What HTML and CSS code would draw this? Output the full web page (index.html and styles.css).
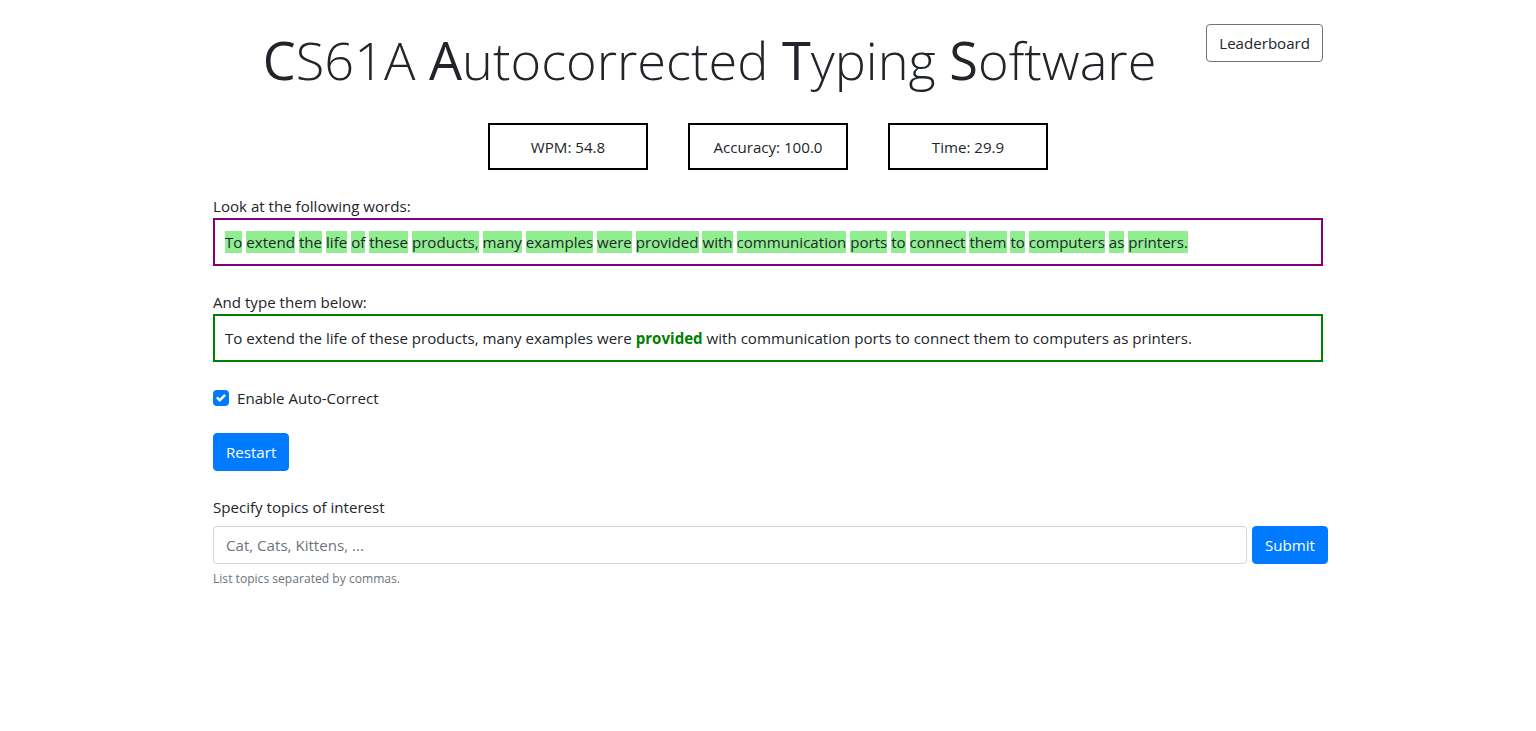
FILE: index.html
```html
<!DOCTYPE html>
<html lang="en">
<head>
<meta charset="utf-8">
<title>CS61A Autocorrected Typing Software</title>
<link rel="stylesheet" href="styles.css">
</head>
<body>
<div class="container">
  <header class="header">
    <h1 class="title"><b>C</b>S61A <b>A</b>utocorrected <b>T</b>yping <b>S</b>oftware</h1>
    <button class="btn btn-outline">Leaderboard</button>
  </header>

  <div class="stats">
    <div class="stat">WPM: 54.8</div>
    <div class="stat">Accuracy: 100.0</div>
    <div class="stat">Time: 29.9</div>
  </div>

  <div class="label">Look at the following words:</div>
  <div class="prompt-box">
    <span class="w">To</span> <span class="w">extend</span> <span class="w">the</span> <span class="w">life</span> <span class="w">of</span> <span class="w">these</span> <span class="w">products,</span> <span class="w">many</span> <span class="w">examples</span> <span class="w">were</span> <span class="w">provided</span> <span class="w">with</span> <span class="w">communication</span> <span class="w">ports</span> <span class="w">to</span> <span class="w">connect</span> <span class="w">them</span> <span class="w">to</span> <span class="w">computers</span> <span class="w">as</span> <span class="w">printers.</span>
  </div>

  <div class="label label-second">And type them below:</div>
  <div class="typed-box">To extend the life of these products, many examples were <strong class="hl">provided</strong> with communication ports to connect them to computers as printers.</div>

  <label class="check">
    <span class="check-box"><svg width="10" height="10" viewBox="0 0 8 8"><path fill="#fff" d="M6.564.75l-3.59 3.612-1.538-1.55L0 4.26l2.974 2.99L8 2.193z"/></svg></span>
    <span class="check-text">Enable Auto-Correct</span>
  </label>

  <button class="btn btn-primary restart">Restart</button>

  <div class="topics">
    <div class="topics-label">Specify topics of interest</div>
    <div class="topics-row">
      <input class="topics-input" type="text" placeholder="Cat, Cats, Kittens, ...">
      <button class="btn btn-primary submit">Submit</button>
    </div>
    <small class="help">List topics separated by commas.</small>
  </div>
</div>
</body>
</html>
```

FILE: styles.css
```css
* { box-sizing: border-box; }
html, body { margin: 0; padding: 0; background: #fff; }
body {
  font-family: "Open Sans", "Noto Sans", "Liberation Sans", sans-serif;
  font-size: 15.1px;
  line-height: 24px;
  color: #212529;
}
.container {
  width: 1140px;
  margin: 0 auto;
  padding: 0 15px;
}
.header {
  display: flex;
  align-items: flex-start;
  padding-top: 24px;
}
.title {
  flex: 1;
  margin: 0;
  padding-top: 4px;
  text-align: center;
  font-size: 52.3px;
  font-weight: 300;
  line-height: 64px;
  color: #212529;
}
.title b { font-weight: 400; }
.btn {
  font-family: inherit;
  font-size: 15.1px;
  line-height: 24px;
  padding: 6px 12px;
  border-radius: 4px;
  border: 1px solid transparent;
  cursor: pointer;
}
.btn-outline {
  background: #fff;
  border-color: #6c757d;
  color: #212529;
}
.btn-primary {
  background: #007bff;
  border-color: #007bff;
  color: #fff;
}
.stats {
  display: flex;
  justify-content: center;
  gap: 40px;
  margin-top: 31px;
}
.stat {
  width: 160px;
  height: 47px;
  border: 2px solid #000;
  display: flex;
  align-items: center;
  justify-content: center;
}
.label {
  margin-top: 24px;
  line-height: 24px;
}
.label-second { margin-top: 24px; }
.prompt-box, .typed-box {
  border: 2px solid #800080;
  padding: 10px 10px;
  line-height: 24px;
}
.typed-box { border-color: #008000; }
.w { background: #90ee90; padding: 1px 0; }
.hl { color: #008000; font-weight: 700; }
.check {
  display: flex;
  align-items: center;
  gap: 8px;
  margin-top: 24px;
}
.check-box {
  width: 16px;
  height: 16px;
  border-radius: 4px;
  background: #007bff;
  display: flex;
  align-items: center;
  justify-content: center;
}
.restart {
  display: block;
  margin-top: 23px;
}
.topics { margin-top: 24px; }
.topics-label { margin-bottom: 7px; }
.topics-row {
  display: flex;
  gap: 5px;
  margin-right: -5px;
}
.topics-input {
  flex: 1;
  height: 38px;
  padding: 6px 12px;
  font-family: inherit;
  font-size: 15.1px;
  border: 1px solid #ced4da;
  border-radius: 4px;
  color: #495057;
}
.topics-input::placeholder { color: #6c757d; }
.submit { height: 38px; }
.help {
  display: block;
  margin-top: 6px;
  font-size: 12.1px;
  line-height: 18px;
  color: #6c757d;
}
```
